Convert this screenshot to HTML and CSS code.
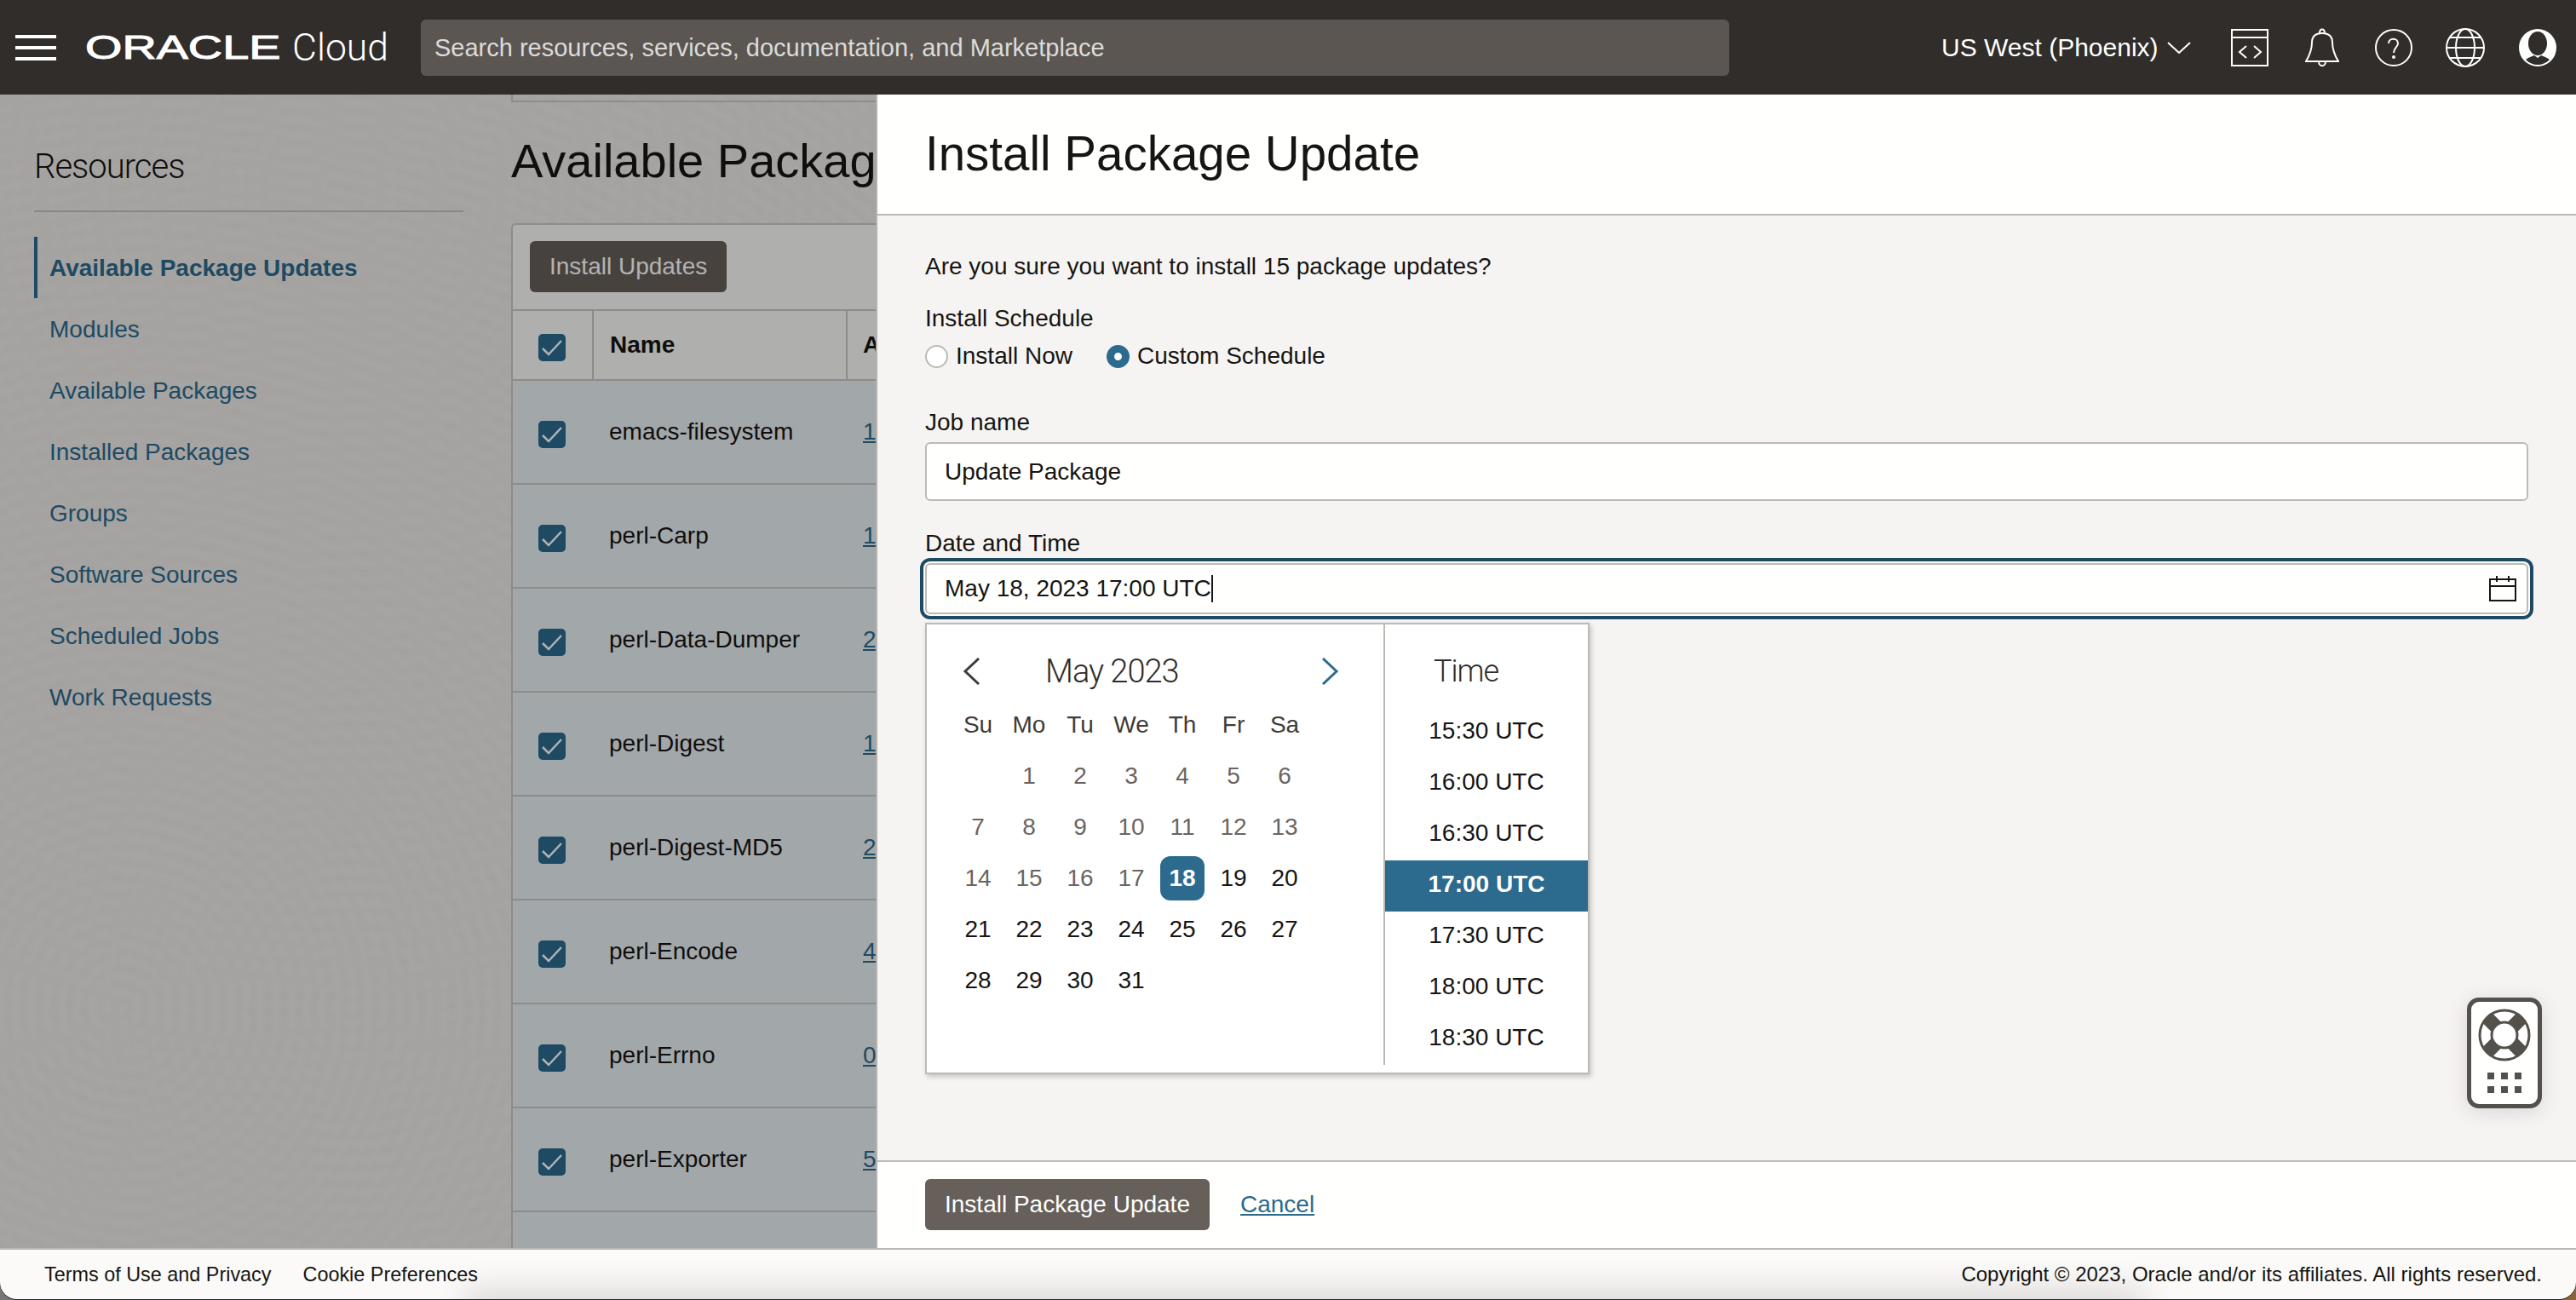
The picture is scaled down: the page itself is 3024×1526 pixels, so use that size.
FILE: index.html
```html
<!DOCTYPE html>
<html lang="en">
<head>
  <meta charset="UTF-8">
  <title>Install Package Update - Oracle Cloud</title>
  <link rel="stylesheet" href="styles.css">
</head>
<body>

<header class="topbar">
  <div class="burger"><div></div><div></div><div></div></div>
  <div class="logo"><span class="logo-word">ORACLE</span><span class="logo-cloud">Cloud</span></div>
  <div class="search">Search resources, services, documentation, and Marketplace</div>
  <div class="region">US West (Phoenix)
    <svg width="28" height="14" viewBox="0 0 28 14"><path d="M1 1l13 12L27 1" fill="none" stroke="#fff" stroke-width="2"/></svg>
  </div>
  <div class="top-icons">
    <svg width="44" height="44" viewBox="0 0 44 44" fill="none" stroke="#fff" stroke-width="2"><rect x="1" y="1" width="42" height="42"/><path d="M1 10h42M18 20l-8 7 8 7M27 20l8 7-8 7"/></svg>
    <svg width="40" height="46" viewBox="0 0 40 46" fill="none" stroke="#fff" stroke-width="2"><path d="M1 39C7 29 8 21 8 17 8 9 13 6 20 6s12 3 12 11c0 4 1 12 7 22zM17 6c0-6 6-6 6 0M16 39c0 7 8 7 8 0"/></svg>
    <svg width="44" height="44" viewBox="0 0 44 44" fill="none" stroke="#fff" stroke-width="2"><circle cx="22" cy="22" r="21"/><path d="M16 17c0-7 11-7 11 0 0 4-5 5-5 11"/><circle cx="22" cy="33" r="1" fill="#fff"/></svg>
    <svg width="46" height="46" viewBox="0 0 46 46" fill="none" stroke="#fff" stroke-width="2"><circle cx="23" cy="23" r="22"/><ellipse cx="23" cy="23" rx="11" ry="22"/><path d="M1 23h44M5 11h36M5 35h36"/></svg>
    <svg width="44" height="46" viewBox="0 0 44 46"><circle cx="22" cy="23" r="22" fill="#fff"/><ellipse cx="22" cy="18" rx="11" ry="14" fill="#312d2a"/><path d="M8 37c4-3 8-4 10-5l4 3 4-3c2 1 6 2 10 5-4 4-9 6-14 6s-10-2-14-6z" fill="#312d2a"/></svg>
  </div>
</header>

<div class="content">
  <aside class="sidebar">
    <h3>Resources</h3>
    <nav>
      <a href="#" class="active">Available Package Updates</a>
      <a href="#">Modules</a>
      <a href="#">Available Packages</a>
      <a href="#">Installed Packages</a>
      <a href="#">Groups</a>
      <a href="#">Software Sources</a>
      <a href="#">Scheduled Jobs</a>
      <a href="#">Work Requests</a>
    </nav>
  </aside>

  <main>
    <div class="top-card"></div>
    <h1>Available Packag</h1>
    <div class="table-card">
      <div class="toolbar"><button class="btn btn-dim">Install Updates</button></div>
      <div class="tbl-head">
        <div class="cell-check"><span class="check"><svg width="32" height="32" viewBox="0 0 32 32"><path d="M5 17l7 7L27 8" fill="none" stroke="#fff" stroke-width="2.5"/></svg></span></div>
        <div class="cell-name">Name</div>
        <div class="cell-link">A</div>
      </div>
      <div class="tbl-row">
        <div class="cell-check"><span class="check"><svg width="32" height="32" viewBox="0 0 32 32"><path d="M5 17l7 7L27 8" fill="none" stroke="#fff" stroke-width="2.5"/></svg></span></div>
        <div class="cell-name">emacs-filesystem</div>
        <div class="cell-link"><a href="#">1</a></div>
      </div>
      <div class="tbl-row">
        <div class="cell-check"><span class="check"><svg width="32" height="32" viewBox="0 0 32 32"><path d="M5 17l7 7L27 8" fill="none" stroke="#fff" stroke-width="2.5"/></svg></span></div>
        <div class="cell-name">perl-Carp</div>
        <div class="cell-link"><a href="#">1</a></div>
      </div>
      <div class="tbl-row">
        <div class="cell-check"><span class="check"><svg width="32" height="32" viewBox="0 0 32 32"><path d="M5 17l7 7L27 8" fill="none" stroke="#fff" stroke-width="2.5"/></svg></span></div>
        <div class="cell-name">perl-Data-Dumper</div>
        <div class="cell-link"><a href="#">2</a></div>
      </div>
      <div class="tbl-row">
        <div class="cell-check"><span class="check"><svg width="32" height="32" viewBox="0 0 32 32"><path d="M5 17l7 7L27 8" fill="none" stroke="#fff" stroke-width="2.5"/></svg></span></div>
        <div class="cell-name">perl-Digest</div>
        <div class="cell-link"><a href="#">1</a></div>
      </div>
      <div class="tbl-row">
        <div class="cell-check"><span class="check"><svg width="32" height="32" viewBox="0 0 32 32"><path d="M5 17l7 7L27 8" fill="none" stroke="#fff" stroke-width="2.5"/></svg></span></div>
        <div class="cell-name">perl-Digest-MD5</div>
        <div class="cell-link"><a href="#">2</a></div>
      </div>
      <div class="tbl-row">
        <div class="cell-check"><span class="check"><svg width="32" height="32" viewBox="0 0 32 32"><path d="M5 17l7 7L27 8" fill="none" stroke="#fff" stroke-width="2.5"/></svg></span></div>
        <div class="cell-name">perl-Encode</div>
        <div class="cell-link"><a href="#">4</a></div>
      </div>
      <div class="tbl-row">
        <div class="cell-check"><span class="check"><svg width="32" height="32" viewBox="0 0 32 32"><path d="M5 17l7 7L27 8" fill="none" stroke="#fff" stroke-width="2.5"/></svg></span></div>
        <div class="cell-name">perl-Errno</div>
        <div class="cell-link"><a href="#">0</a></div>
      </div>
      <div class="tbl-row">
        <div class="cell-check"><span class="check"><svg width="32" height="32" viewBox="0 0 32 32"><path d="M5 17l7 7L27 8" fill="none" stroke="#fff" stroke-width="2.5"/></svg></span></div>
        <div class="cell-name">perl-Exporter</div>
        <div class="cell-link"><a href="#">5</a></div>
      </div>
      <div class="tbl-row"></div>
    </div>
  </main>

  <div class="dim"></div>

  <!-- Drawer -->
  <section class="drawer">
    <div class="drawer-head"><h2>Install Package Update</h2></div>
    <div class="drawer-body">
      <p class="confirm">Are you sure you want to install 15 package updates?</p>
      <div class="label schedule-label">Install Schedule</div>
      <div class="radios">
        <label class="radio"><span class="dot"></span>Install Now</label>
        <label class="radio"><span class="dot on"></span>Custom Schedule</label>
      </div>
      <div class="label job-label">Job name</div>
      <div class="input job-input">Update Package</div>
      <div class="label date-label">Date and Time</div>
      <div class="date-wrap">
        <div class="input date-input">
          <span>May 18, 2023 17:00 UTC</span><span class="caret"></span>
          <svg class="cal-icon" width="32" height="30" viewBox="0 0 32 30" fill="none" stroke="#161513" stroke-width="2"><path d="M1 4h30v25H1zM1 12h30M9 0v7M23 0v7"/></svg>
        </div>

        <div class="picker">
          <div class="cal">
            <div class="cal-head">
              <svg width="21" height="32" viewBox="0 0 21 32"><path d="M19 1L3 16l16 15" fill="none" stroke="#403c38" stroke-width="3"/></svg>
              <span class="cal-title">May 2023</span>
              <svg class="cal-next" width="21" height="32" viewBox="0 0 21 32"><path d="M2 1l16 15L2 31" fill="none" stroke="#2c6a8e" stroke-width="3"/></svg>
            </div>
            <div class="days">
              <span class="wk">Su</span><span class="wk">Mo</span><span class="wk">Tu</span><span class="wk">We</span><span class="wk">Th</span><span class="wk">Fr</span><span class="wk">Sa</span>
              <span></span><span class="off">1</span><span class="off">2</span><span class="off">3</span><span class="off">4</span><span class="off">5</span><span class="off">6</span>
              <span class="off">7</span><span class="off">8</span><span class="off">9</span><span class="off">10</span><span class="off">11</span><span class="off">12</span><span class="off">13</span>
              <span class="off">14</span><span class="off">15</span><span class="off">16</span><span class="off">17</span><span><b class="today">18</b></span><span>19</span><span>20</span>
              <span>21</span><span>22</span><span>23</span><span>24</span><span>25</span><span>26</span><span>27</span>
              <span>28</span><span>29</span><span>30</span><span>31</span>
            </div>
          </div>
          <div class="times">
            <div class="times-title">Time</div>
            <div class="time">15:30 UTC</div>
            <div class="time">16:00 UTC</div>
            <div class="time">16:30 UTC</div>
            <div class="time active">17:00 UTC</div>
            <div class="time">17:30 UTC</div>
            <div class="time">18:00 UTC</div>
            <div class="time">18:30 UTC</div>
          </div>
        </div>
      </div>
    </div>
    <div class="drawer-foot">
      <button class="btn">Install Package Update</button>
      <a href="#" class="cancel">Cancel</a>
    </div>
  </section>

  <div class="help-tab">
    <svg width="62" height="62" viewBox="0 0 62 62">
      <circle cx="31" cy="31" r="29" fill="#fff" stroke="#54514c" stroke-width="3"/>
      <path d="M11 11l11 11M51 11L40 22M11 51l11-11M51 51L40 40" stroke="#54514c" stroke-width="16"/>
      <circle cx="31" cy="31" r="15" fill="#fff" stroke="#54514c" stroke-width="3"/>
    </svg>
    <div class="help-dots"><i></i><i></i><i></i><i></i><i></i><i></i></div>
  </div>
</div>

<footer>
  <a href="#">Terms of Use and Privacy</a>
  <a href="#">Cookie Preferences</a>
  <span class="copyright">Copyright © 2023, Oracle and/or its affiliates. All rights reserved.</span>
</footer>

</body>
</html>
```

FILE: styles.css
```css
:root {
  --bar: #312d2a;
  --link: #2c6a8e;
  --text: #161513;
  --line: #bdb9b3;
  --muted: #6b6560;
  --panel: #f5f4f2;
}

* {
  margin: 0;
  padding: 0;
  box-sizing: border-box;
}

body {
  width: 3024px;
  height: 1526px;
  display: flex;
  flex-direction: column;
  overflow: hidden;
  font-family: "Liberation Sans", Arial, sans-serif;
  font-size: 28px;
  line-height: 36px;
  color: var(--text);
  background: linear-gradient(90deg, #777 50%, #8a6533 50%);
}

a {
  color: var(--link);
  text-decoration: none;
}

/* Top bar */
.topbar {
  height: 111px;
  flex: none;
  display: flex;
  align-items: center;
  background: var(--bar);
  color: #fff;
  padding-left: 18px;
}

.burger {
  width: 48px;
  display: flex;
  flex-direction: column;
  gap: 9px;
}

.burger div {
  height: 4px;
  background: #fff;
}

.logo {
  margin-left: 34px;
  width: 394px;
  display: flex;
  align-items: center;
}

.logo-word {
  width: 160px;
  margin-right: 83px;
  font-size: 39px;
  line-height: 40px;
  -webkit-text-stroke: 1px #fff;
  transform: scaleX(1.43);
  transform-origin: left center;
}

.logo-cloud {
  font-family: Roboto, sans-serif;
  font-weight: 300;
  font-size: 44.5px;
  line-height: 48px;
}

.search {
  width: 1536px;
  height: 66px;
  padding: 0 16px;
  font-size: 29px;
  line-height: 66px;
  background: #5b5652;
  border-radius: 6px;
  color: #dcdbd9;
}

.region {
  margin-left: 249px;
  width: 320px;
  display: flex;
  align-items: center;
  gap: 10px;
  font-size: 30px;
  white-space: nowrap;
}

.top-icons {
  display: grid;
  grid-template-columns: repeat(5, 84.4px);
  justify-items: center;
  align-items: center;
}

.top-icons svg {
  display: block;
}

/* Page under the drawer */
.content {
  flex: 1;
  position: relative;
  display: flex;
  overflow: hidden;
  background-color: #f0edea;
  background-image:
    repeating-radial-gradient(circle at 145px 1072px, rgba(0,0,0,0) 0, rgba(0,0,0,.012) 9px, rgba(0,0,0,0) 18px),
    repeating-radial-gradient(circle at 413px 1072px, rgba(0,0,0,0) 0, rgba(0,0,0,.008) 9px, rgba(0,0,0,0) 18px),
    repeating-radial-gradient(circle at 400px 110px, rgba(0,0,0,0) 0, rgba(0,0,0,.008) 10px, rgba(0,0,0,0) 20px);
}

.sidebar {
  width: 600px;
  flex: none;
  padding: 61px 56px 0 40px;
}

.sidebar h3 {
  font-family: Roboto, sans-serif;
  font-weight: 300;
  font-size: 40px;
  letter-spacing: -1px;
  line-height: 48px;
  padding-bottom: 27px;
  border-bottom: 2px solid #c5c2bf;
}

.sidebar nav {
  margin-top: 29px;
  display: flex;
  flex-direction: column;
}

.sidebar nav a {
  height: 72px;
  line-height: 74px;
  padding-left: 14px;
  border-left: 4px solid transparent;
}

.sidebar nav a.active {
  font-weight: bold;
  border-left-color: var(--link);
}

main {
  width: 428px;
  flex: none;
}

.top-card {
  height: 9px;
  border: 2px solid #ccc8c3;
  border-top: 0;
  border-right: 0;
}

h1 {
  margin-top: 37px;
  font-size: 56px;
  font-weight: normal;
  line-height: 64px;
  white-space: nowrap;
}

.table-card {
  margin-top: 41px;
  border-left: 2px solid #ccc8c3;
  border-top: 2px solid #ccc8c3;
  border-top-left-radius: 6px;
  background: #fbfbf9;
}

.toolbar {
  height: 101px;
  padding: 19px 20px 0;
  border-bottom: 2px solid #ccc8c3;
}

.btn {
  height: 60px;
  padding: 0 23px;
  border: 0;
  border-radius: 6px;
  background: #665f5a;
  color: #fff;
  font: 28px "Liberation Sans", Arial, sans-serif;
}

.tbl-head, .tbl-row {
  display: grid;
  grid-template-columns: 93px 298px 1fr;
  align-items: center;
  border-bottom: 2px solid #ccc8c3;
}

.tbl-head {
  height: 82px;
  font-weight: bold;
}

.tbl-head > div {
  height: 100%;
  display: flex;
  align-items: center;
}

.tbl-head .cell-name, .tbl-head .cell-link {
  border-left: 2px solid #ccc8c3;
}

.tbl-head .cell-name { padding-left: 19px; }
.tbl-head .cell-link { padding-left: 18px; }

.tbl-row {
  height: 122px;
  background: #e9f0f4;
}

.tbl-row .cell-name { padding-left: 20px; }
.tbl-row .cell-link { padding-left: 20px; }

.tbl-row .cell-link a {
  text-decoration: underline;
}

.cell-check {
  padding-left: 30px;
  display: flex;
  align-items: center;
}

.check {
  width: 32px;
  height: 32px;
  margin-top: 5px;
  border-radius: 5px;
  background: var(--link);
  display: block;
}

.check svg { display: block; }

.dim {
  position: absolute;
  inset: 0;
  background: rgba(0, 0, 0, 0.3);
}

/* Drawer */
.drawer {
  position: absolute;
  top: 0;
  right: 0;
  bottom: 0;
  width: 1996px;
  display: flex;
  flex-direction: column;
  border-left: 2px solid #b3b1ae;
  background: #fff;
}

.drawer-head {
  height: 142px;
  flex: none;
  display: flex;
  align-items: center;
  padding-left: 56px;
  border-bottom: 2px solid var(--line);
  background: #fffffd;
}

.drawer-head h2 {
  font-size: 56.5px;
  font-weight: normal;
  line-height: 64px;
}

.drawer-body {
  flex: 1;
  padding: 42px 56px 0;
  background: var(--panel);
}

.schedule-label { margin-top: 25px; }

.radios {
  margin-top: 8px;
  display: flex;
  gap: 40px;
}

.radio {
  display: flex;
  align-items: center;
  gap: 9px;
}

.dot {
  width: 27px;
  height: 27px;
  border-radius: 50%;
  border: 2px solid var(--line);
  background: #fff;
}

.dot.on {
  border: 9px solid var(--link);
}

.job-label { margin-top: 42px; }

.input {
  margin-top: 5px;
  padding: 0 21px;
  display: flex;
  align-items: center;
  background: #fffffd;
  border: 2px solid var(--line);
  border-radius: 6px;
}

.job-input { height: 69px; }

.date-label { margin-top: 32px; }

.date-wrap { position: relative; }

.date-input {
  height: 60px;
  box-shadow: 0 0 0 2px #fff, 0 0 0 6px #1f4a63;
}

.caret {
  width: 2px;
  height: 32px;
  background: var(--text);
}

.cal-icon {
  margin-left: auto;
  margin-right: -9px;
}

.picker {
  position: absolute;
  top: 70px;
  left: 0;
  width: 780px;
  height: 530px;
  display: flex;
  align-items: flex-start;
  background: #fff;
  border: 2px solid var(--line);
  box-shadow: 2px 3px 6px rgba(0, 0, 0, 0.2);
}

.cal {
  width: 536px;
  padding-left: 30px;
}

.cal-head {
  height: 88px;
  padding: 25px 52px 0 12px;
  display: flex;
  align-items: flex-start;
}

.cal-head svg {
  margin-top: 14px;
}

.cal-title, .times-title {
  font-family: Roboto, sans-serif;
  font-weight: 300;
  font-size: 38px;
  letter-spacing: -1px;
  line-height: 60px;
  color: #312d2a;
}

.cal-title {
  margin-left: 76px;
}

.cal-head .cal-next {
  margin-left: auto;
}

.days {
  display: grid;
  grid-template-columns: repeat(7, 60px);
  grid-auto-rows: 60px;
}

.days span {
  display: flex;
  align-items: center;
  justify-content: center;
}

.days .wk { color: #403c38; }
.days .off { color: var(--muted); }

.today {
  width: 52px;
  height: 52px;
  border-radius: 12px;
  background: var(--link);
  color: #fff;
  text-align: center;
  line-height: 52px;
}

.times {
  width: 240px;
  height: 517px;
  border-left: 2px solid var(--line);
}

.times-title {
  height: 97px;
  padding: 25px 0 0 57px;
  font-size: 36px;
}

.time {
  height: 60px;
  line-height: 56px;
  text-align: center;
}

.time.active {
  background: var(--link);
  color: #fff;
  font-weight: bold;
}

.drawer-foot {
  height: 103px;
  flex: none;
  padding: 20px 56px 0;
  display: flex;
  align-items: flex-start;
  gap: 36px;
  border-top: 2px solid var(--line);
  background: #fffffd;
}

.cancel {
  line-height: 60px;
  text-decoration: underline;
}

/* Help tab */
.help-tab {
  position: absolute;
  right: 40px;
  bottom: 164px;
  width: 88px;
  height: 130px;
  padding: 8px 0 0 8px;
  border: 5px solid #54514c;
  border-radius: 14px;
  background: #fffffd;
  box-shadow: 0 4px 24px rgba(0, 0, 0, 0.12);
}

.help-tab svg {
  display: block;
}

.help-dots {
  margin: 13px 0 0 11px;
  display: grid;
  grid-template-columns: repeat(3, 8px);
  gap: 8px;
}

.help-dots i {
  display: block;
  height: 8px;
  background: #54514c;
}

footer {
  height: 60px;
  margin-bottom: 1px;
  flex: none;
  position: relative;
  overflow: hidden;
  padding: 0 40px 0 52px;
  display: flex;
  align-items: center;
  gap: 37px;
  border-top: 2px solid var(--line);
  border-radius: 0 0 20px 20px;
  box-shadow: 0 1px 0 #222;
  background: #fbfaf8;
  font-size: 23.4px;
}

/* dock shadow along the bottom edge */
footer::after {
  content: "";
  position: absolute;
  left: 560px;
  right: 520px;
  bottom: -20px;
  height: 20px;
  box-shadow: 0 0 36px 14px rgba(0, 0, 0, 0.12);
}

footer a {
  color: var(--text);
}

.copyright {
  margin-left: auto;
  font-size: 24px;
}
```
